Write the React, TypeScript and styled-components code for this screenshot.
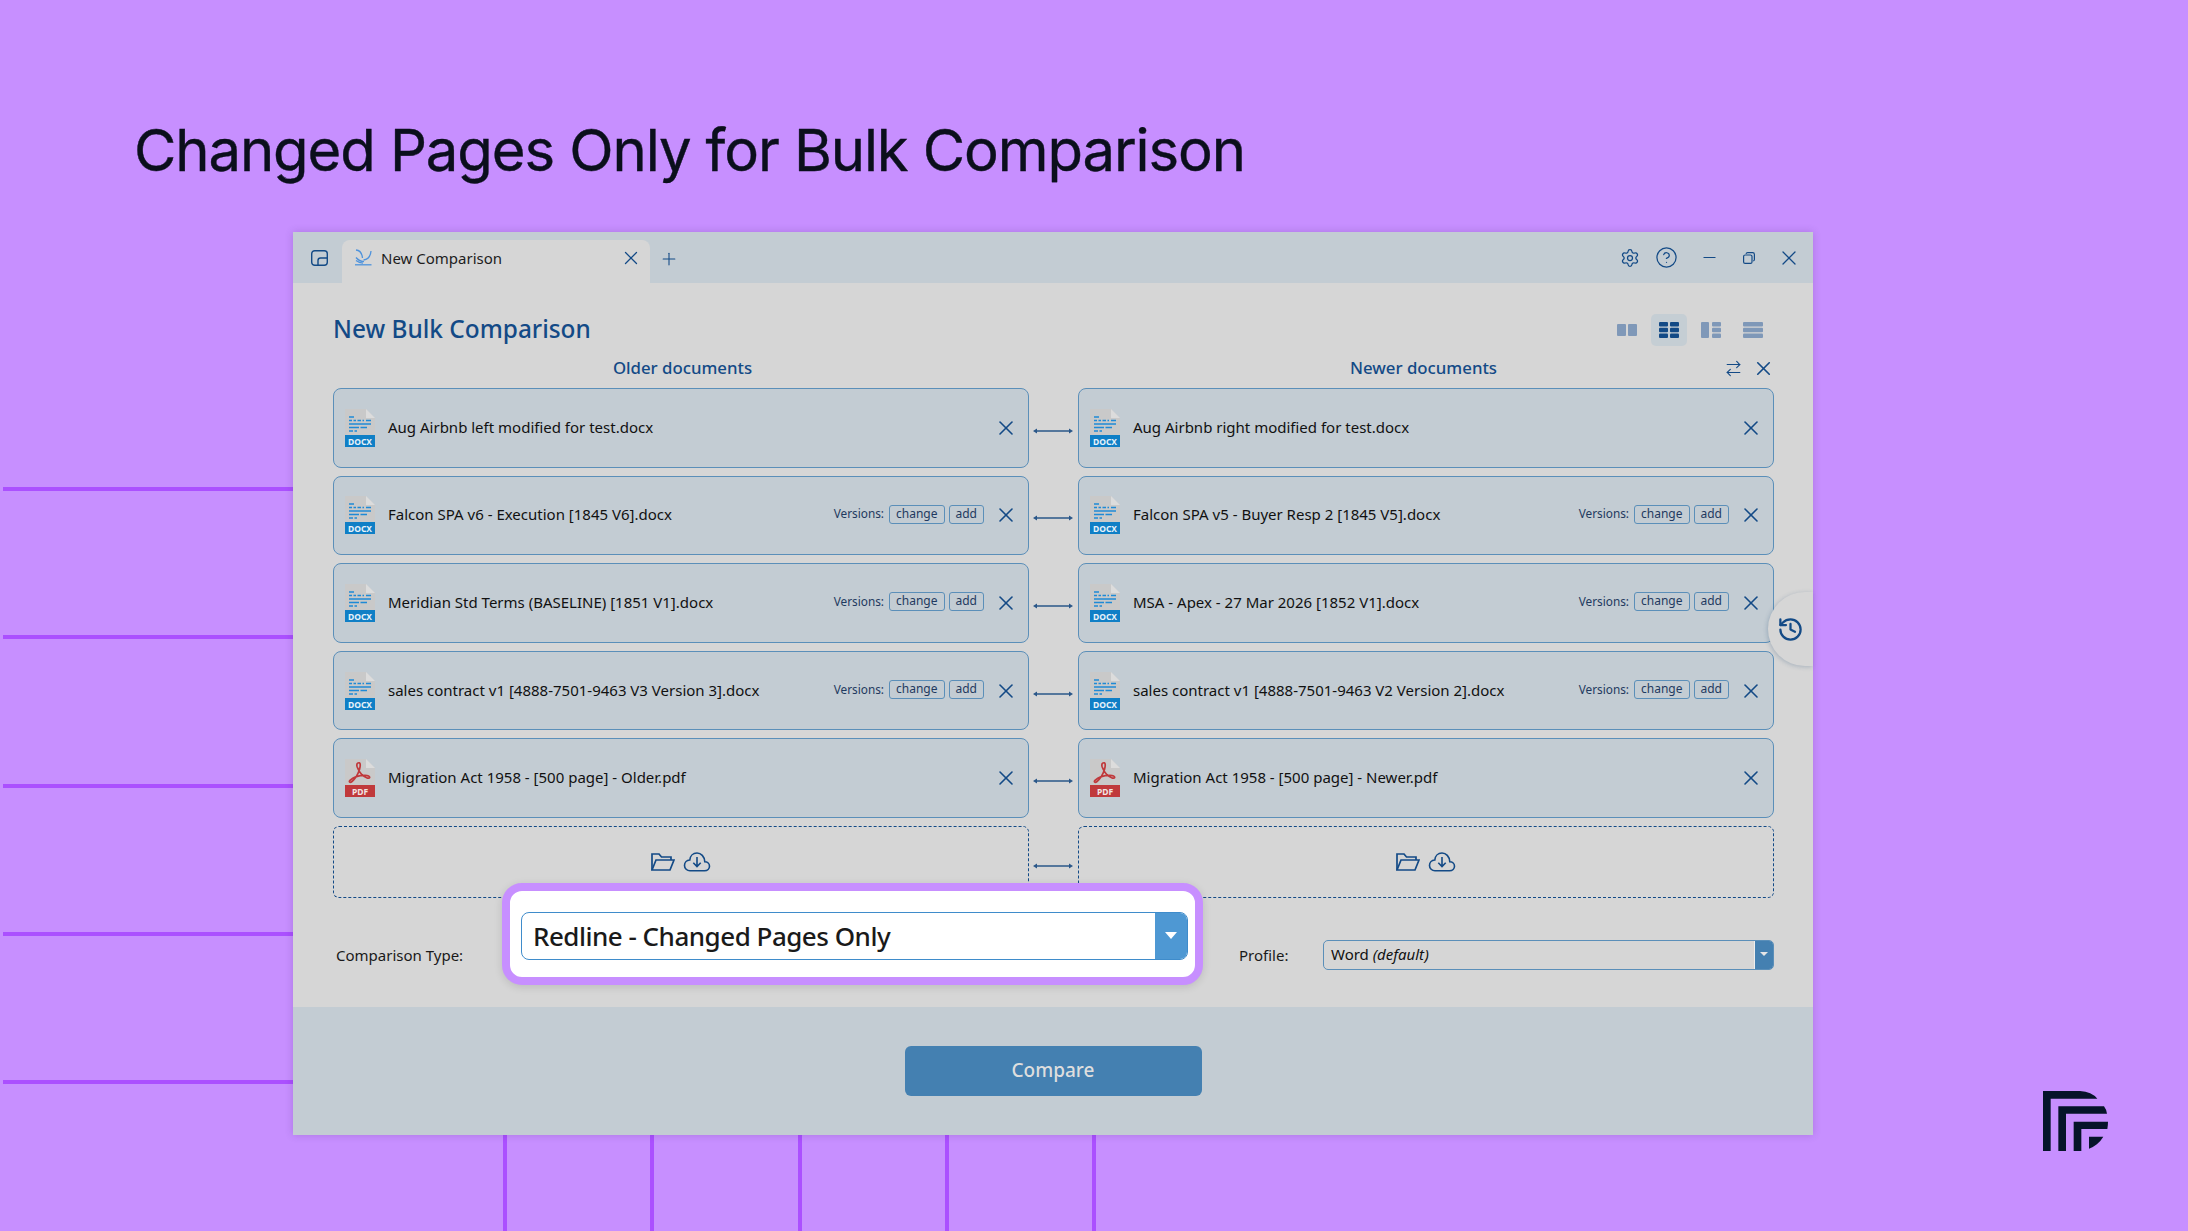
import React from 'react';
import styled, { createGlobalStyle } from 'styled-components';
import { ArrowRightLeft, CircleHelp, History, Minus, Plus, Settings, X } from 'lucide-react';

const NAVY = '#134a86';
const UI_FONT = '"Noto Sans", "Open Sans", sans-serif';

const rows = [
  { left: 'Aug Airbnb left modified for test.docx', right: 'Aug Airbnb right modified for test.docx', kind: 'docx', versions: false },
  { left: 'Falcon SPA v6 - Execution [1845 V6].docx', right: 'Falcon SPA v5 - Buyer Resp 2 [1845 V5].docx', kind: 'docx', versions: true },
  { left: 'Meridian Std Terms (BASELINE) [1851 V1].docx', right: 'MSA - Apex - 27 Mar 2026 [1852 V1].docx', kind: 'docx', versions: true },
  { left: 'sales contract v1 [4888-7501-9463 V3 Version 3].docx', right: 'sales contract v1 [4888-7501-9463 V2 Version 2].docx', kind: 'docx', versions: true },
  { left: 'Migration Act 1958 - [500 page] - Older.pdf', right: 'Migration Act 1958 - [500 page] - Newer.pdf', kind: 'pdf', versions: false },
];

const hLines = [487, 635, 784, 932, 1080];
const vLines = [503, 650, 798, 945, 1092];

const DocIcon = ({ kind }: { kind: string }) => {
  const isPdf = kind === 'pdf';
  return (
    <FileIcon viewBox="0 0 30 38" width="30" height="38">
      <path d="M0 0H21L30 9V38H0Z" fill="#c9c9c9" />
      <path d="M21 0L30 9H21Z" fill="#dcdcdc" />
      {isPdf ? (
        <>
          <path
            d="M13 4c2-1 3 1 1.500 6.500C13 15 10 20 7 22.500c-2 1.600-3.500.5-2-1.200 3-3 9-5 15-5 3 0 5 1 4.600 2.300-.5 1.200-3.400.4-5.600-1.200-3-2.200-5.500-6-6.800-9.400C11.500 6 12 4.500 13 4z"
            fill="none"
            stroke="#c0393b"
            strokeWidth="1.700"
          />
          <rect x="0" y="26" width="30" height="12" fill="#c0393b" />
          <PdfLabel x="15" y="35.500" textAnchor="middle">PDF</PdfLabel>
        </>
      ) : (
        <>
          <path
            d="M4 8H9M4 11.500H7M8.500 11.500H11M12.500 11.500H16M17.500 11.500H19M21 11.500H26M4 15H26M4 18.500H14M15.500 18.500H22M4 22H8M9.500 22H12"
            stroke="#1f8ad6"
            strokeWidth="1.500"
            fill="none"
          />
          <rect x="0" y="26" width="30" height="12" fill="#0f7fc6" />
          <DocxLabel x="15" y="35.700" textAnchor="middle">DOCX</DocxLabel>
        </>
      )}
    </FileIcon>
  );
};

const LinkArrow = () => (
  <svg width="40" height="10" viewBox="0 0 40 10">
    <path d="M2 5H38" stroke="#2a5789" strokeWidth="1.500" />
    <path d="M0 5L4 2.500V7.500ZM40 5L36 2.500V7.500Z" fill="#2a5789" />
  </svg>
);

const FileCard = ({ name, kind, versions }: { name: string; kind: string; versions: boolean }) => (
  <Card>
    <DocIcon kind={kind} />
    <FileName>{name}</FileName>
    <CardActions>
      {versions && (
        <>
          <VersionsLabel>Versions:</VersionsLabel>
          <TagButton>change</TagButton>
          <TagButton>add</TagButton>
        </>
      )}
      <RemoveSlot>
        <X size={24} strokeWidth={1.600} color={NAVY} />
      </RemoveSlot>
    </CardActions>
  </Card>
);

const DropActions = () => (
  <DropZone>
    <svg width="24" height="18" viewBox="0 0 24 18" fill="none" stroke={NAVY} strokeWidth="1.700">
      <path d="M1 17V1H8L10.500 4H20V7" />
      <path d="M1 17L5 7H23L19 17Z" />
    </svg>
    <svg width="28" height="20" viewBox="0 0 27 20" fill="none" stroke={NAVY} strokeWidth="1.600">
      <path d="M6.500 18.800H21c3 0 5-2 5-4.500 0-2.600-2-4.500-4.700-4.500C21 4.500 17.500 1 13.500 1 9.500 1 6.600 4 6.300 8 3 8.200 1 10.800 1 13.500c0 3 2.500 5.300 5.500 5.300z" />
      <path d="M13.500 5v9M9.800 10.800l3.700 3.700 3.700-3.700" />
    </svg>
  </DropZone>
);

const ViewIcon = ({ layout, active }: { layout: number; active?: boolean }) => {
  const fill = active ? NAVY : '#7f98b8';
  const bars = [
    [[0, 2, 9, 12], [11, 2, 9, 12]],
    [[0, 0, 9, 4.500], [11, 0, 9, 4.500], [0, 5.700, 9, 4.500], [11, 5.700, 9, 4.500], [0, 11.500, 9, 4.500], [11, 11.500, 9, 4.500]],
    [[0, 0, 8, 16], [11, 0, 9, 4.500], [11, 5.700, 9, 4.500], [11, 11.500, 9, 4.500]],
    [[0, 0, 20, 4.500], [0, 5.700, 20, 4.500], [0, 11.500, 20, 4.500]],
  ][layout];
  return (
    <svg width="20" height="16" viewBox="0 0 20 16">
      {bars.map(([x, y, w, h], i) => (
        <rect key={i} x={x} y={y} width={w} height={h} rx="1" fill={fill} />
      ))}
    </svg>
  );
};

const App: React.FC = () => (
  <Page>
    <GlobalStyle />
    <Decor width="2188" height="1231" viewBox="0 0 2188 1231">
      {hLines.map(y => (
        <rect key={y} x="3" y={y} width="290" height="4" fill="#ab50ff" />
      ))}
      {vLines.map(x => (
        <rect key={x} x={x} y="1135" width="4" height="96" fill="#ab50ff" />
      ))}
    </Decor>

    <Title>Changed Pages Only for Bulk Comparison</Title>

    <Window>
      <TitleBar>
        <svg width="17" height="16" viewBox="0 0 17 16" fill="none" stroke={NAVY} strokeWidth="1.400">
          <rect x="0.700" y="0.700" width="15.600" height="14.600" rx="3" />
          <path d="M7 15V10.500C7 9 8 8 9.500 8H16" />
        </svg>
        <Tab>
          <svg width="17" height="17" viewBox="0 0 17 17" fill="none" stroke="#4f93dc" strokeWidth="1.300">
            <path d="M1 1c4 .3 6 3.500 6.500 8" />
            <path d="M16 2c-.5 5-3 8.500-7.500 9" />
            <path d="M1 8.500c2 2.500 5 4 8 4.200" />
            <path d="M1 11.500c2 1.500 4 2.500 7 2.700" />
            <path d="M0 15.800h16.500" />
          </svg>
          <TabLabel>New Comparison</TabLabel>
          <TabClose>
            <X size={22} strokeWidth={1.400} color={NAVY} />
          </TabClose>
        </Tab>
        <AddTab>
          <Plus size={20} strokeWidth={1.300} color={NAVY} />
        </AddTab>
        <Tools>
          <Settings size={20} strokeWidth={1.500} color={NAVY} />
          <CircleHelp size={23} strokeWidth={1.300} color={NAVY} />
        </Tools>
        <WinButtons>
          <WinButton>
            <Minus size={19} strokeWidth={1.500} color={NAVY} />
          </WinButton>
          <WinButton>
            <svg width="12" height="12" viewBox="0 0 12 12" fill="none" stroke={NAVY} strokeWidth="1.200">
              <rect x="0.600" y="3" width="8.400" height="8.400" rx="1.500" />
              <path d="M3 1.800C3.300 1 3.800.6 4.600.6h5c1 0 1.800.8 1.800 1.800v5c0 .8-.4 1.300-1.200 1.600" />
            </svg>
          </WinButton>
          <WinButton>
            <X size={24} strokeWidth={1.300} color={NAVY} />
          </WinButton>
        </WinButtons>
      </TitleBar>

      <Body>
        <HeaderRow>
          <Heading>New Bulk Comparison</Heading>
          <ViewToggles>
            {[0, 1, 2, 3].map(l => (
              <ViewToggle key={l} $active={l === 1}>
                <ViewIcon layout={l} active={l === 1} />
              </ViewToggle>
            ))}
          </ViewToggles>
        </HeaderRow>

        <Grid>
          <ColumnHead $left={3}>Older documents</ColumnHead>
          <span />
          <ColumnHead $right={5}>
            Newer documents
            <ColumnActions>
              <ArrowRightLeft size={19} strokeWidth={1.400} color={NAVY} />
              <X size={23} strokeWidth={1.700} color={NAVY} />
            </ColumnActions>
          </ColumnHead>

          {rows.map(row => (
            <React.Fragment key={row.left}>
              <FileCard name={row.left} kind={row.kind} versions={row.versions} />
              <Connector $drop={3}>
                <LinkArrow />
              </Connector>
              <FileCard name={row.right} kind={row.kind} versions={row.versions} />
            </React.Fragment>
          ))}

          <DropActions />
          <Connector $drop={0}>
            <LinkArrow />
          </Connector>
          <DropActions />
        </Grid>

        <OptionsRow>
          <OptionLabel $width={169}>Comparison Type:</OptionLabel>
          <Callout>
            <BigSelect>
              <BigValue>Redline - Changed Pages Only</BigValue>
              <BigCaret />
            </BigSelect>
          </Callout>
          <OptionLabel $width={87} $gap={33}>Profile:</OptionLabel>
          <SmallSelect>
            <SmallValue>
              Word <em>(default)</em>
            </SmallValue>
            <SmallCaret />
          </SmallSelect>
        </OptionsRow>
      </Body>

      <Footer>
        <CompareButton>Compare</CompareButton>
      </Footer>

      <HistoryTab>
        <History size={27} strokeWidth={2} color={NAVY} />
      </HistoryTab>
    </Window>

    <Logo width="65" height="60" viewBox="189 93 195 180">
      <path d="M189 273V93H300Q335 95 352 116H212V273Z" />
      <path d="M235 273V139H372Q380 150 381 161H258V273Z" />
      <path d="M281 273V185H384Q384 196 382 207H304V273Z" />
      <path d="M327 266V230H370Q355 255 327 266Z" />
    </Logo>
  </Page>
);

const GlobalStyle = createGlobalStyle`
  html, body {
    margin: 0;
    padding: 0;
    background: #c78fff;
  }
  * {
    box-sizing: border-box;
  }
`;

const Page = styled.div`
  position: relative;
  width: 2188px;
  height: 1231px;
  padding: 110px 0 0 134px;
  overflow: hidden;
  background: #c78fff;
`;

const Decor = styled.svg`
  position: absolute;
  left: 0;
  top: 0;
`;

const Title = styled.h1`
  margin: 0;
  height: 80px;
  font: 400 58px/80px Inter, "Noto Sans", sans-serif;
  letter-spacing: -1.1px;
  -webkit-text-stroke: 0.4px #0b0f1c;
  color: #0b0f1c;
  white-space: nowrap;
`;

const Window = styled.div`
  position: relative;
  display: flex;
  flex-direction: column;
  width: 1520px;
  height: 903px;
  margin: 42px 0 0 159px;
  background: #d6d6d6;
  font-family: ${UI_FONT};
  box-shadow: 0 0 8px rgba(60, 30, 100, 0.2);
`;

const TitleBar = styled.div`
  display: flex;
  align-items: center;
  flex: 0 0 51px;
  padding: 0 4px 0 18px;
  background: #c3ccd3;
`;

const Tab = styled.div`
  display: flex;
  align-items: center;
  align-self: flex-end;
  width: 308px;
  height: 43px;
  margin-left: 14px;
  padding: 0 8px 8px 13px;
  background: #d6d6d6;
  border-radius: 8px 8px 0 0;
`;

const TabLabel = styled.span`
  margin-left: 9px;
  font-size: 15px;
  color: #1d1d1d;
  white-space: nowrap;
`;

const TabClose = styled.span`
  display: flex;
  margin-left: auto;
`;

const AddTab = styled.span`
  display: flex;
  margin: 3px 0 0 9px;
`;

const Tools = styled.div`
  display: flex;
  align-items: center;
  gap: 15px;
  margin-left: auto;
  margin-right: 11px;
`;

const WinButtons = styled.div`
  display: flex;
`;

const WinButton = styled.span`
  display: flex;
  align-items: center;
  justify-content: center;
  width: 40px;
  height: 30px;
`;

const Body = styled.div`
  flex: 0 0 724px;
  padding: 31px 39px 0 40px;
`;

const HeaderRow = styled.div`
  display: flex;
  align-items: center;
  justify-content: space-between;
  height: 32px;
`;

const Heading = styled.h2`
  margin: 0 0 3px;
  font-size: 24.400px;
  font-weight: 500;
  color: ${NAVY};
  white-space: nowrap;
`;

const ViewToggles = styled.div`
  display: flex;
  gap: 6px;
  margin-right: 3px;
`;

const ViewToggle = styled.span<{ $active?: boolean }>`
  display: flex;
  align-items: center;
  justify-content: center;
  width: 36px;
  height: 32px;
  border-radius: 5px;
  background: ${p => (p.$active ? '#c5ced4' : 'transparent')};
`;

const Grid = styled.div`
  display: grid;
  grid-template-columns: 696px 49px 696px;
  grid-template-rows: 34px;
  grid-auto-rows: 79.600px;
  row-gap: 8px;
`;

const ColumnHead = styled.div<{ $left?: number; $right?: number }>`
  position: relative;
  display: flex;
  align-items: center;
  justify-content: center;
  padding: 8px ${p => p.$right ?? 0}px 0 ${p => p.$left ?? 0}px;
  font-size: 16.800px;
  font-weight: 500;
  color: ${NAVY};
`;

const ColumnActions = styled.span`
  position: absolute;
  right: -1px;
  top: 11px;
  display: flex;
  align-items: center;
  gap: 9px;
`;

const Card = styled.div`
  display: flex;
  align-items: center;
  min-width: 0;
  padding: 0 0 0 11px;
  background: #c3ccd3;
  border: 1.500px solid #5b8fb9;
  border-radius: 8px;
`;

const FileIcon = styled.svg`
  flex: none;
`;

const PdfLabel = styled.text`
  font: 700 8.500px "Noto Sans", sans-serif;
  fill: #f2e4e4;
`;

const DocxLabel = styled.text`
  font: 700 8.500px "Noto Sans", sans-serif;
  fill: #e6f2fa;
`;

const FileName = styled.span`
  margin: 0 0 2px 13px;
  font-size: 15px;
  color: #111;
  white-space: nowrap;
`;

const CardActions = styled.div`
  display: flex;
  align-items: center;
  margin-left: auto;
  padding-right: 10px;
`;

const VersionsLabel = styled.span`
  margin: 0 1px 4px 0;
  font-size: 11.800px;
  color: #1f3a60;
`;

const TagButton = styled.span`
  display: flex;
  align-items: center;
  height: 19px;
  margin: 0 0 2px 4px;
  padding: 0 6px 2px;
  border: 1.300px solid #5b8fb9;
  border-radius: 3px;
  font-size: 12px;
  color: #1f3a60;
`;

const RemoveSlot = styled.span`
  display: flex;
  margin-left: 10px;
`;

const Connector = styled.div<{ $drop: number }>`
  display: flex;
  align-items: center;
  justify-content: center;
  height: 100%;
  padding: ${p => p.$drop * 2}px 2px 0 0;
`;

const DropZone = styled.div`
  display: flex;
  align-items: center;
  justify-content: center;
  gap: 8px;
  height: 72px;
  border: 1.500px dashed ${NAVY};
  border-radius: 6px;
`;

const OptionsRow = styled.div`
  display: flex;
  align-items: center;
  height: 30px;
  margin-top: 34.700px;
`;

const OptionLabel = styled.span<{ $width: number; $gap?: number }>`
  flex: 0 0 ${p => p.$width}px;
  margin-left: ${p => p.$gap ?? 0}px;
  padding-left: 3px;
  font-size: 15px;
  color: #1a1a1a;
  white-space: nowrap;
`;

const Callout = styled.div`
  position: relative;
  z-index: 1;
  flex: 0 0 701px;
  align-self: flex-start;
  height: 102px;
  margin: -57px 0 -15px;
  padding: 21px 7px 16px 11px;
  background: #fff;
  border: 8px solid #c78fff;
  border-radius: 20px;
  box-shadow: 0 2px 8px rgba(0, 0, 0, 0.12);
`;

const BigSelect = styled.div`
  display: flex;
  height: 48px;
  border: 1.500px solid #3f8ccb;
  border-radius: 8px;
  overflow: hidden;
`;

const BigValue = styled.span`
  flex: 1;
  padding-left: 11px;
  font-size: 26px;
  font-weight: 500;
  line-height: 46px;
  letter-spacing: -0.5px;
  color: #1a1a1a;
`;

const BigCaret = styled.span`
  position: relative;
  flex: 0 0 32px;
  background: #4e98d3;
  &::after {
    content: '';
    position: absolute;
    left: 10px;
    top: 19px;
    border: 6px solid transparent;
    border-top: 7px solid #fff;
    border-bottom: 0;
  }
`;

const SmallSelect = styled.div`
  display: flex;
  flex: 1;
  height: 30px;
  border: 1.500px solid #5b8fb9;
  border-radius: 5px;
  overflow: hidden;
`;

const SmallValue = styled.span`
  flex: 1;
  padding-left: 7px;
  font-size: 15px;
  line-height: 27px;
  color: #111;
  border-right: 1px solid #eee;
`;

const SmallCaret = styled.span`
  position: relative;
  flex: 0 0 18px;
  background: #4480b1;
  &::after {
    content: '';
    position: absolute;
    left: 5px;
    top: 11px;
    border: 4px solid transparent;
    border-top: 4px solid #e6e6e6;
    border-bottom: 0;
  }
`;

const Footer = styled.div`
  display: flex;
  flex: 1;
  align-items: center;
  justify-content: center;
  background: #c3ccd3;
`;

const CompareButton = styled.button`
  width: 297px;
  height: 50px;
  padding: 0 0 3px;
  background: #4480b1;
  border: 0;
  border-radius: 6px;
  font: 500 19px ${UI_FONT};
  color: #dedede;
`;

const HistoryTab = styled.div`
  position: absolute;
  right: 0;
  top: 360px;
  display: flex;
  align-items: center;
  justify-content: center;
  width: 45px;
  height: 74px;
  background: #d6d6d6;
  border-radius: 37px 0 0 37px;
  box-shadow: -1px 1px 4px rgba(40, 80, 120, 0.25);
`;

const Logo = styled.svg`
  position: absolute;
  left: 2043px;
  top: 1091px;
  fill: #06142a;
`;

export default App;
